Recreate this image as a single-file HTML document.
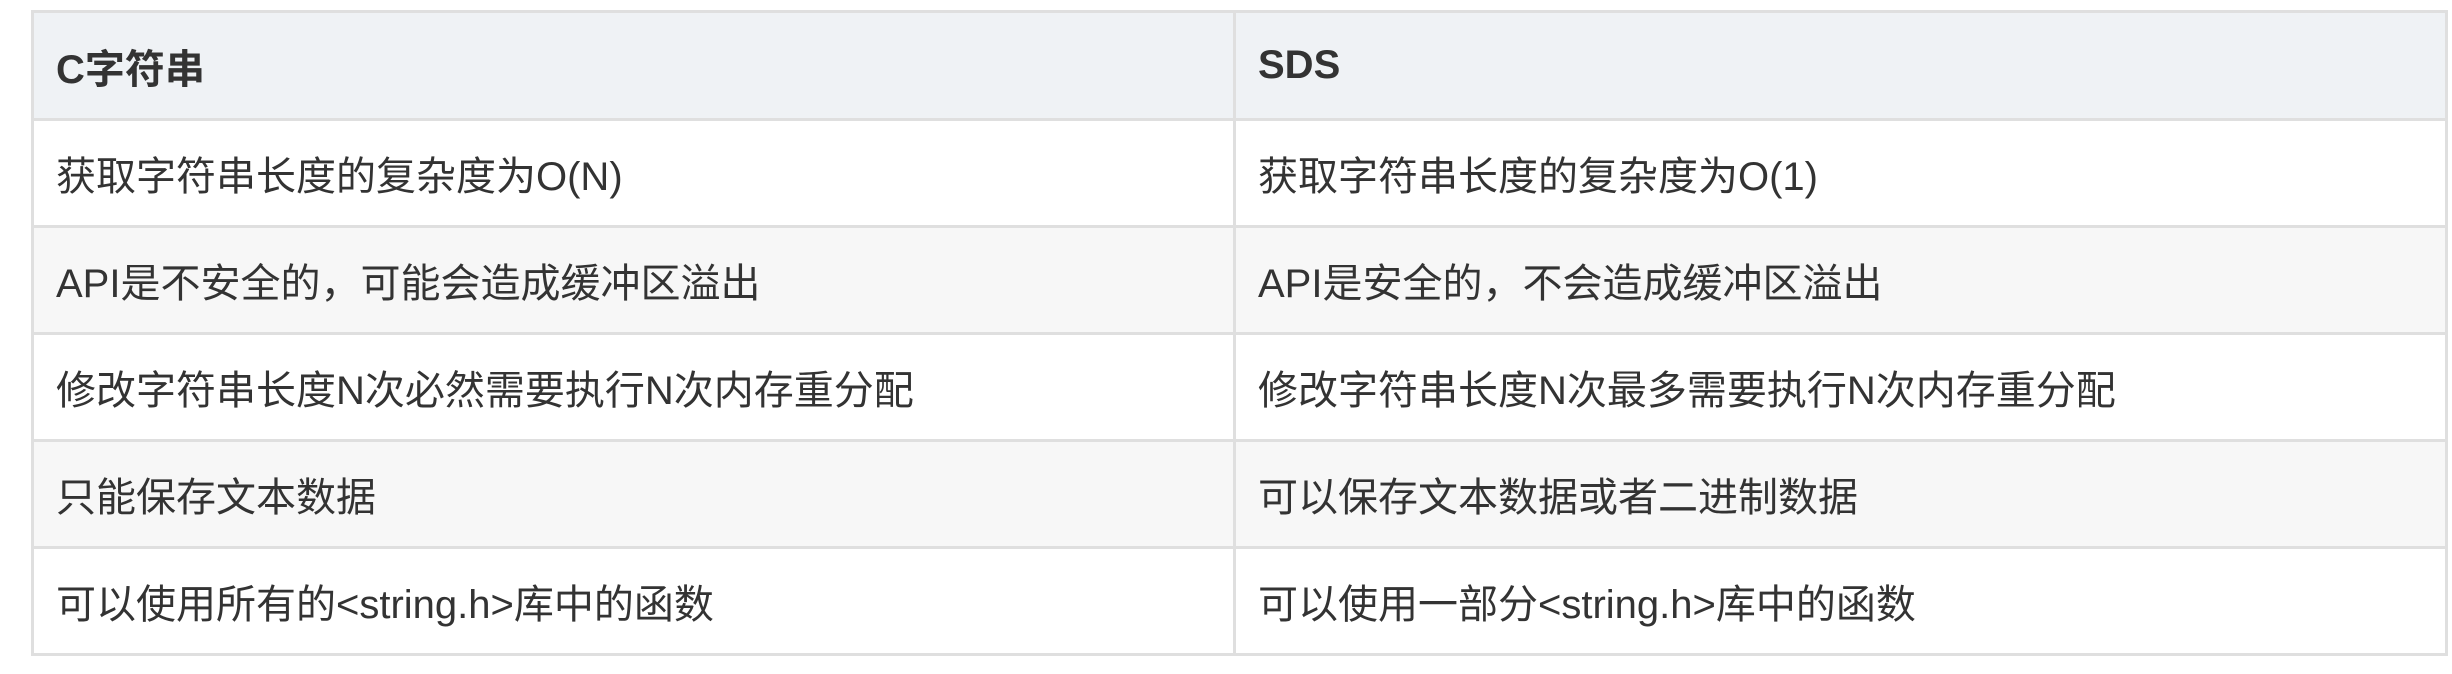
<!DOCTYPE html>
<html><head><meta charset="utf-8"><style>
html,body{margin:0;padding:0;background:#fff;width:2452px;height:674px;overflow:hidden}
table{position:absolute;left:31px;top:10px;width:2417px;border-collapse:collapse;font-family:"Liberation Sans","Noto Sans CJK SC",sans-serif;font-size:40px;color:#333}
td,th{border:3px solid #dfdfdf;padding:0 0 0 22px;text-align:left;vertical-align:middle;box-sizing:border-box}
th{background:#eff2f5;font-weight:bold;height:108px}
td{height:107px}
tr:nth-child(odd) td{background:#fff}
tr:nth-child(even) td{background:#f7f7f7}
th:first-child,td:first-child{width:1202px}
</style></head><body>
<table>
<thead><tr><th>C字符串</th><th>SDS</th></tr></thead>
<tbody>
<tr><td>获取字符串长度的复杂度为O(N)</td><td>获取字符串长度的复杂度为O(1)</td></tr>
<tr><td>API是不安全的，可能会造成缓冲区溢出</td><td>API是安全的，不会造成缓冲区溢出</td></tr>
<tr><td>修改字符串长度N次必然需要执行N次内存重分配</td><td>修改字符串长度N次最多需要执行N次内存重分配</td></tr>
<tr><td>只能保存文本数据</td><td>可以保存文本数据或者二进制数据</td></tr>
<tr><td>可以使用所有的&lt;string.h&gt;库中的函数</td><td>可以使用一部分&lt;string.h&gt;库中的函数</td></tr>
</tbody>
</table>
</body></html>
